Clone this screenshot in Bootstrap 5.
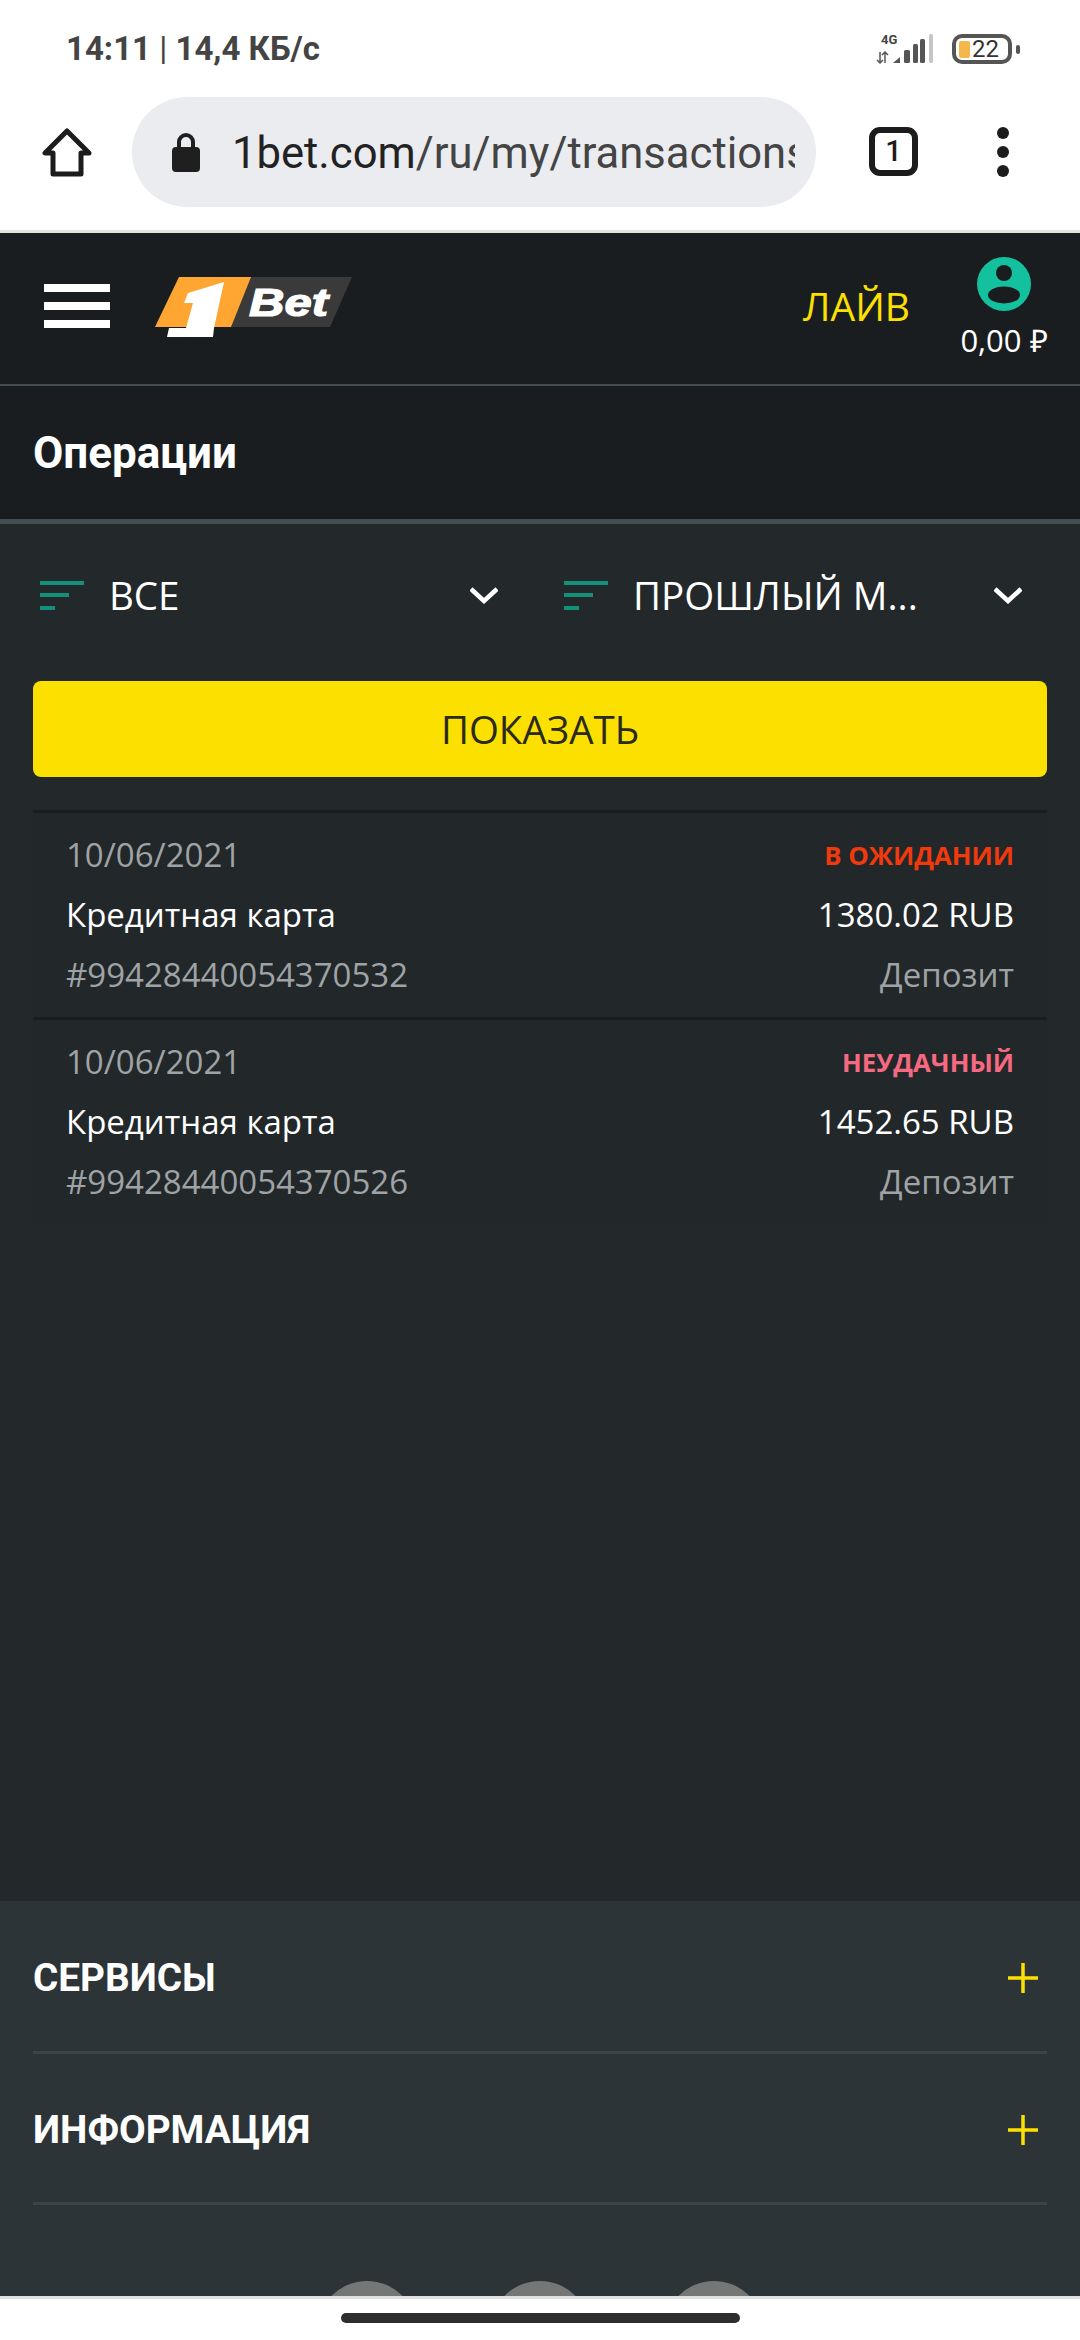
<!DOCTYPE html>
<html lang="ru">

<head>
    <meta charset="UTF-8">
    <meta name="viewport" content="width=device-width, initial-scale=1.0">
    <title>1Bet - Операции</title>
    <link href="https://cdn.jsdelivr.net/npm/bootstrap@5.3.0/dist/css/bootstrap.min.css" rel="stylesheet">
    <style>
        html, body { width: 1080px; height: 2340px; }
        body { background: #fff; font-family: "Open Sans", sans-serif; overflow: hidden; }

        .status-bar { height: 98px; padding: 30px 60px 0 66px; color: #444; font: 700 33px/38px Roboto, sans-serif; }
        .status-bar .sep { font-weight: 400; }
        .net-icons { margin-top: 3px; }
        .batt { width: 60px; height: 30px; margin-left: 16px; border: 4px solid #555; border-radius: 10px; padding-left: 3px; font: 400 24px/22px Roboto, sans-serif; color: #333; }
        .batt-fill { width: 11px; height: 17px; margin-right: 2px; background: #f5b64c; border-radius: 2px; }
        .batt-nub { width: 4px; height: 9px; margin-left: 4px; background: #555; border-radius: 2px; }

        .toolbar { height: 135px; padding: 0 0 25px 42px; border-bottom: 3px solid #e3e3e0; }
        .url-pill { width: 684px; height: 110px; margin-left: 40px; padding: 0 21px 0 40px; background: #ebecf0; border-radius: 55px; }
        .url-text { min-width: 0; margin: 4px 0 0 32px; overflow: hidden; white-space: nowrap; font: 400 43.6px/56px Roboto, sans-serif; color: #222; }
        .url-text span { color: #444; }
        .tab-count { width: 49px; height: 49px; margin-left: 53px; border: 6px solid #1c1c1c; border-radius: 11px; font: 500 29px/37px Roboto, sans-serif; color: #1c1c1c; text-align: center; }
        .dots { margin-left: 71px; width: 28px; gap: 7px; }
        .dots i { width: 12px; height: 12px; background: #1c1c1c; border-radius: 50%; }

        .site-head { height: 153px; padding: 0 33px 0 44px; background: #1a1d20; border-bottom: 2px solid #434d52; }
        .burger { width: 66px; margin-top: 51px; gap: 10px; }
        .burger i { height: 8px; background: #fff; }
        .logo-box { margin: 44px 0 0 45px; }
        .live-link { margin: 46px 51px 0 auto; color: #fbe000; font-size: 39px; font-weight: 500; line-height: 54px; }
        .account { width: 86px; margin-top: 24px; color: #fff; font-size: 31px; line-height: 40px; white-space: nowrap; }
        .account svg { margin-bottom: 9px; }

        .title-bar { height: 138px; padding: 0 33px; background: #1a1d20; border-bottom: 5px solid #434d52; color: #fff; font: 700 44px/1 Roboto, sans-serif; }

        .page-main { background: #23282b; padding: 45px 33px 0; }
        .filter-row { gap: 34px; height: 52px; }
        .filter-box { width: 490px; padding: 0 25px 0 7px; color: #fff; font-size: 38.5px; line-height: 52px; }
        .filter-mark { width: 44px; margin-right: 25px; gap: 8.5px; }
        .filter-mark i { height: 4px; background: #14907a; }
        .filter-mark i:nth-child(2) { width: 29px; }
        .filter-mark i:nth-child(3) { width: 15px; }
        .btn.show-btn { height: 96px; margin-top: 60px; background: #fbe000; border: 0; border-radius: 8px; color: #2a2a20; font-size: 38.5px; line-height: 92px; padding: 0; }
        .txn-list { margin-top: 33px; }
        .txn-row { height: 207px; padding: 12px 33px; background: #22272a; border-top: 3px solid #1a1d20; font-size: 33px; line-height: 60px; }
        .txn-muted { color: #9fa3a5; }
        .txn-main { color: #fff; }
        .txn-status { font-size: 25.8px; font-weight: 700; }
        .st-wait { color: #f03a0e; }
        .st-fail { color: #f56a80; }

        .site-foot { height: 395px; padding: 0 33px; background: #2d3437; overflow: hidden; }
        .foot-item { padding-top: 4px; border-bottom: 3px solid #3c4447; color: #fff; font: 700 38.7px/1 Roboto, sans-serif; }
        .foot-item svg { margin-right: 9px; }
        .foot-a { height: 153px; }
        .foot-b { height: 151px; }
        .foot-social { gap: 73.5px; margin-top: 76px; }
        .foot-social i { width: 100px; height: 100px; flex: none; background: #757676; border-radius: 50%; }

        .nav-strip { height: 44px; padding-top: 14px; border-top: 3px solid #dfe1e0; }
        .nav-pill { width: 399px; height: 10px; background: #2e2e2e; border-radius: 5px; }
    </style>
</head>

<body class="d-flex flex-column">
    <div class="status-bar d-flex justify-content-between align-items-start flex-shrink-0">
        <div>14:11 <span class="sep">|</span> 14,4 КБ/с</div>
        <div class="net-icons d-flex align-items-center">
            <svg width="60" height="32" viewBox="0 0 60 32">
                <text x="5" y="11" font-family="Roboto" font-weight="700" font-size="13" fill="#444">4G</text>
                <path d="M4 19v11M1 27l3 3 3-3M9 30V19M6 22l3-3 3 3" fill="none" stroke="#555" stroke-width="1.5"/>
                <path d="M17 30l7-6v6z" fill="#555"/>
                <rect x="28" y="17" width="6" height="13" rx="1.5" fill="#555"/>
                <rect x="37" y="11" width="5" height="19" rx="1.5" fill="#555"/>
                <rect x="44" y="6" width="5" height="24" rx="1.5" fill="#555"/>
                <rect x="53" y="1" width="4" height="29" rx="1.5" fill="#c6c6c6"/>
            </svg>
            <div class="batt d-flex align-items-center"><div class="batt-fill"></div>22</div>
            <div class="batt-nub"></div>
        </div>
    </div>

    <div class="toolbar d-flex align-items-center flex-shrink-0">
        <svg width="50" height="50" viewBox="0 0 50 50">
            <path d="M25 4L3 26h8v21h28V26h8z" fill="none" stroke="#1c1c1c" stroke-width="5" stroke-linejoin="round"/>
        </svg>
        <div class="url-pill d-flex align-items-center">
            <svg class="flex-shrink-0" width="28" height="40" viewBox="0 0 28 40">
                <path d="M7 17v-7a7 7 0 0 1 14 0v7" fill="none" stroke="#1f1f1f" stroke-width="4"/>
                <rect y="15" width="28" height="25" rx="4" fill="#1f1f1f"/>
            </svg>
            <div class="url-text">1bet.com<span>/ru/my/transactions</span></div>
        </div>
        <div class="tab-count flex-shrink-0">1</div>
        <div class="dots d-flex flex-column align-items-center"><i></i><i></i><i></i></div>
    </div>

    <header class="site-head d-flex align-items-start flex-shrink-0">
        <div class="burger d-flex flex-column"><i></i><i></i><i></i></div>
        <div class="logo-box">
            <svg width="198" height="60" viewBox="0 0 198 60">
                <path d="M24 0H197L175 50H0z" fill="#3a3a3a"/>
                <path d="M24 0H96L76 50H0z" fill="#ffa531"/>
                <path d="M33 16L69 5L59 51L58 60H12L14 51H31L38 26H29z" fill="#fff"/>
                <text x="94" y="39" font-family="Liberation Sans" font-weight="700" font-style="italic" font-size="38" fill="#fff" stroke="#fff" stroke-width="1.2" textLength="79" lengthAdjust="spacingAndGlyphs">Bet</text>
            </svg>
        </div>
        <div class="live-link">ЛАЙВ</div>
        <div class="account d-flex flex-column align-items-center">
            <svg class="flex-shrink-0" width="54" height="54" viewBox="0 0 54 54">
                <circle cx="27" cy="27" r="27" fill="#14c19f"/>
                <circle cx="27" cy="16" r="8" fill="#1a1d20"/>
                <ellipse cx="27" cy="38" rx="16" ry="8.5" fill="#1a1d20"/>
            </svg>
            <span>0,00 ₽</span>
        </div>
    </header>

    <div class="title-bar d-flex align-items-center flex-shrink-0">Операции</div>

    <main class="page-main flex-grow-1">
        <div class="filter-row d-flex">
            <div class="filter-box d-flex align-items-center">
                <div class="filter-mark d-flex flex-column"><i></i><i></i><i></i></div>
                <span class="flex-grow-1">ВСЕ</span>
                <svg width="28" height="18" viewBox="0 0 28 18"><path d="M1 3l13 12L27 3" fill="none" stroke="#fff" stroke-width="4.5"/></svg>
            </div>
            <div class="filter-box d-flex align-items-center">
                <div class="filter-mark d-flex flex-column"><i></i><i></i><i></i></div>
                <span class="flex-grow-1">ПРОШЛЫЙ М...</span>
                <svg width="28" height="18" viewBox="0 0 28 18"><path d="M1 3l13 12L27 3" fill="none" stroke="#fff" stroke-width="4.5"/></svg>
            </div>
        </div>

        <button class="btn show-btn w-100 d-block text-center">ПОКАЗАТЬ</button>

        <div class="txn-list">
            <div class="txn-row">
                <div class="d-flex justify-content-between"><span class="txn-muted">10/06/2021</span><span class="txn-status st-wait">В ОЖИДАНИИ</span></div>
                <div class="d-flex justify-content-between txn-main"><span>Кредитная карта</span><span>1380.02 RUB</span></div>
                <div class="d-flex justify-content-between txn-muted"><span>#99428440054370532</span><span>Депозит</span></div>
            </div>
            <div class="txn-row">
                <div class="d-flex justify-content-between"><span class="txn-muted">10/06/2021</span><span class="txn-status st-fail">НЕУДАЧНЫЙ</span></div>
                <div class="d-flex justify-content-between txn-main"><span>Кредитная карта</span><span>1452.65 RUB</span></div>
                <div class="d-flex justify-content-between txn-muted"><span>#99428440054370526</span><span>Депозит</span></div>
            </div>
        </div>
    </main>

    <footer class="site-foot flex-shrink-0">
        <div class="foot-item foot-a d-flex justify-content-between align-items-center">
            <span>СЕРВИСЫ</span>
            <svg width="30" height="30" viewBox="0 0 30 30"><path d="M15 0v30M0 15h30" stroke="#fbe000" stroke-width="3.5"/></svg>
        </div>
        <div class="foot-item foot-b d-flex justify-content-between align-items-center">
            <span>ИНФОРМАЦИЯ</span>
            <svg width="30" height="30" viewBox="0 0 30 30"><path d="M15 0v30M0 15h30" stroke="#fbe000" stroke-width="3.5"/></svg>
        </div>
        <div class="foot-social d-flex justify-content-center"><i></i><i></i><i></i></div>
    </footer>

    <div class="nav-strip d-flex justify-content-center flex-shrink-0"><div class="nav-pill"></div></div>

    <script src="https://cdn.jsdelivr.net/npm/bootstrap@5.3.0/dist/js/bootstrap.bundle.min.js"></script>
</body>

</html>
